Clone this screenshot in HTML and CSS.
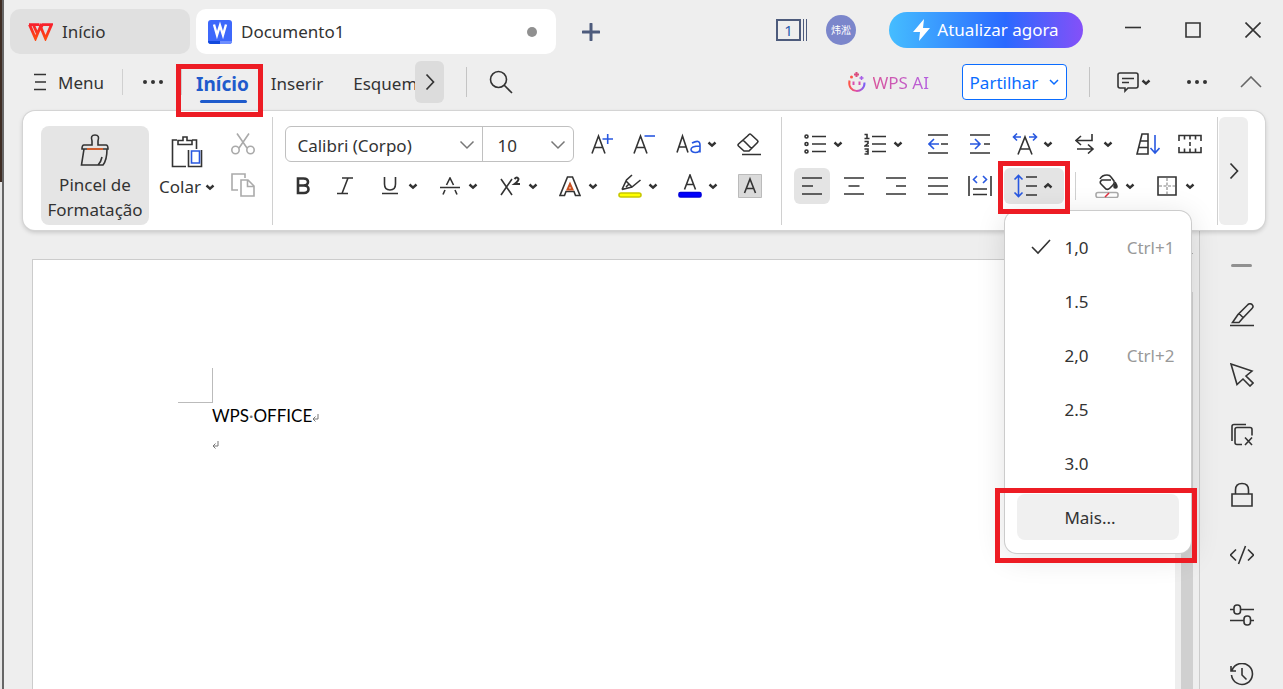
FILE: index.html
```
<!DOCTYPE html>
<html lang="pt">
<head>
    <meta charset="UTF-8">
    <meta name="viewport" content="width=device-width, initial-scale=1.0">
    <title>Documento1 - WPS Office</title>
    <link rel="stylesheet" href="styles.css">
</head>
<body>
    <!-- shared icons -->
    <svg class="sprite" aria-hidden="true">
        <symbol id="caret" viewBox="0 0 10 8"><path d="M1.500 2.500 5 5.700 8.500 2.500" fill="none" stroke="#333" stroke-width="2.400"/></symbol>
        <symbol id="chevron-down" viewBox="0 0 16 10"><path d="M1.500 1.500 8 8l6.500-6.500" fill="none" stroke="#777" stroke-width="1.500"/></symbol>
        <symbol id="chevron-right" viewBox="0 0 10 18"><path d="M1.500 1.500 8.500 9l-7 7.500" fill="none" stroke="#333" stroke-width="1.700"/></symbol>
    </svg>

    <div class="window">
        <header class="titlebar">
            <a href="#" class="doc-tab home">
                <svg class="icon" width="25" height="18" viewBox="0 0 25 18"><defs><linearGradient id="red" x2="0" y2="1"><stop stop-color="#f8202c"/><stop offset="1" stop-color="#ff4a12"/></linearGradient></defs><path d="M1 1.600h10.500M1.500 1.600 7.500 15.500 12.500 3.500 17.500 15.500 23.500 1.600H14.500L12.500 5.500M5.500 2 9 10" stroke="url(#red)" stroke-width="2.800"/></svg>
                <span>Início</span>
            </a>
            <a href="#" class="doc-tab active">
                <svg width="24" height="24" viewBox="0 0 24 24"><rect width="24" height="24" rx="3" fill="#3d68fb"/><path d="M0 21h12v3H3a3 3 0 0 1-3-3z" fill="#1249dd"/><path d="M12 21h12a3 3 0 0 1-3 3h-9z" fill="#6c8dff"/><path d="M6 4.500 9 15l3-9.500L15 15l3-10.500" fill="none" stroke="#fff" stroke-width="2.400"/></svg>
                <span>Documento1</span>
                <i class="unsaved"></i>
            </a>
            <button class="new-tab" aria-label="Novo"><svg class="icon" width="18" height="18" viewBox="0 0 18 18"><path d="M9 1v16M1 9h16" stroke="#4d5b7c" stroke-width="3" stroke-linecap="round"/></svg></button>

            <div class="title-right">
                <button class="windows" aria-label="Janelas"><span>1</span></button>
                <button class="avatar">炜淞</button>
                <button class="upgrade">
                    <svg width="18" height="22" viewBox="0 0 18 22"><path d="M11 0 0 13h7l-1 9L17 9h-7z" fill="#fff"/></svg>
                    Atualizar agora
                </button>
                <div class="window-controls">
                    <button aria-label="Minimizar"><svg class="icon" width="16" height="16" viewBox="0 0 16 16"><path d="M0 5.500h16"/></svg></button>
                    <button aria-label="Maximizar"><svg class="icon" width="16" height="16" viewBox="0 0 16 16"><path d="M1 1h14v14H1z"/></svg></button>
                    <button aria-label="Fechar"><svg class="icon" width="16" height="16" viewBox="0 0 16 16"><path d="M.500.500l15 15m0-15-15 15"/></svg></button>
                </div>
            </div>
        </header>

        <nav class="menubar">
            <button class="menu-btn">
                <svg class="icon" width="13" height="18" viewBox="0 0 13 18"><path d="M0 1.500h12M1 9h11M0 16.500h12"/></svg>
                Menu
            </button>
            <span class="sep"></span>
            <button class="dots" aria-label="Mais opções"><i></i><i></i><i></i></button>
            <span class="sep second"></span>
            <div class="tabs">
                <a href="#" class="tab current">Início<span class="mark"></span></a>
                <a href="#" class="tab">Inserir</a>
                <a href="#" class="tab cut">Esquema</a>
            </div>
            <button class="tabs-next" aria-label="Seguinte"><svg width="10" height="18"><use href="#chevron-right"/></svg></button>
            <span class="sep tall"></span>
            <button aria-label="Pesquisar"><svg class="icon" width="24" height="24" viewBox="0 0 24 24"><circle cx="9.500" cy="9.500" r="8"/><path d="m15 15 8 8"/></svg></button>

            <div class="menu-right">
                <button class="wps-ai">
                    <svg width="20" height="22" viewBox="0 0 20 22" fill="none" stroke-width="2"><defs><linearGradient id="ai"><stop stop-color="#ff5548"/><stop offset=".5" stop-color="#d94fb0"/><stop offset="1" stop-color="#7c62f6"/></linearGradient></defs><path d="M2.500 9.500C0 23 18 23 17.500 11.500" stroke="url(#ai)"/><path d="M6.500 10.500v3.500M12.500 10.500v3.500" stroke="#d94fb0"/><path d="M9.500 1v5M7 3.500h5" stroke="#d94f80"/><path d="M14.500 5v4M12.500 7h4" stroke="#a85fe8" stroke-width="1.500"/><circle cx="4.500" cy="6" r="1.500" fill="#ff5548"/></svg>
                    <span>WPS AI</span>
                </button>
                <button class="share">Partilhar <svg width="10" height="8" viewBox="0 0 10 8"><path d="M1 2l4 4 4-4" fill="none" stroke="#0a6cff" stroke-width="1.500"/></svg></button>
                <span class="sep tall"></span>
                <button class="comment" aria-label="Comentários">
                    <svg class="icon" width="22" height="21" viewBox="0 0 22 21"><path d="M3 1h16q2 0 2 2v11q0 2-2 2h-8l-3 3v-3H3q-2 0-2-2V3q0-2 2-2zM5 6.500h12M5 10.500h7"/></svg>
                    <svg width="10" height="8"><use href="#caret"/></svg>
                </button>
                <button class="dots" aria-label="Mais"><i></i><i></i><i></i></button>
                <button aria-label="Recolher"><svg class="icon" width="22" height="13" viewBox="0 0 22 13"><path d="M1 11 11 1l10 10" stroke="#666"/></svg></button>
            </div>
        </nav>

        <section class="ribbon">
            <button class="big painter">
                <svg class="icon" width="30" height="32" viewBox="0 0 30 32"><path d="M12 11V7q-2-6 3-6t3 6v4h8q2 0 2 4H2q0-4 2-4zM4 15 1.500 31H23q4-5 4-16M18 31q3-3 4-8"/><path d="M7 15h16" stroke="#d06030" stroke-width="2"/></svg>
                <span>Pincel de<br>Formatação</span>
            </button>
            <button class="big paste">
                <svg class="icon" width="32" height="32" viewBox="0 0 32 32"><path d="M6 4H1.500v26.500H15M21 4h4.500v9M7 8.500V4.500h5V1h4v3.500h5v4z"/><path d="M17.500 14v16.500h13V14"/><path d="M20.500 15h8v12h-8z" stroke="#2858e0"/></svg>
                <span>Colar <svg width="10" height="8"><use href="#caret"/></svg></span>
            </button>
            <div class="clip-tools">
                <button aria-label="Cortar"><svg class="icon muted" width="24" height="22" viewBox="0 0 24 22"><path d="M6 .500 16 15M18 .500 8 15"/><circle cx="4.500" cy="17" r="3.700"/><circle cx="19.500" cy="17" r="3.700"/></svg></button>
                <button aria-label="Copiar"><svg class="icon muted" width="24" height="24" viewBox="0 0 24 24"><path d="M7 17H1V1h13v4M10 7h7l6 6v10H10zM16.500 7v6.500H23"/></svg></button>
            </div>
            <span class="divider"></span>

            <div class="group">
                <div class="row">
                    <div class="combos">
                        <span class="combo font"><select aria-label="Tipo de letra"><option>Calibri (Corpo)</option></select><svg width="16" height="10"><use href="#chevron-down"/></svg></span>
                        <span class="combo size"><select aria-label="Tamanho"><option>10</option></select><svg width="16" height="10"><use href="#chevron-down"/></svg></span>
                    </div>
                    <button class="tool" aria-label="Aumentar"><svg class="icon" width="22" height="22" viewBox="0 0 22 22"><path d="M1 20.500 7.500 3 14 20.500M3.500 14.500h8"/><path d="M11.500 6H22M16.700 1v10" class="blue"/></svg></button>
                    <button class="tool" aria-label="Diminuir"><svg class="icon" width="22" height="22" viewBox="0 0 22 22"><path d="M1 20.500 7.500 3 14 20.500M3.500 14.500h8"/><path d="M11.500 3H22" class="blue"/></svg></button>
                    <button class="split" aria-label="Maiúsculas"><svg class="icon" width="26" height="22" viewBox="0 0 26 22"><path d="M1 19.500 6.500 3 12 19.500M3 14h7"/><path d="M16 10q8-4 8 2v7.500M24 13q-9 0-9 3.500c0 4 9 4 9-.500" class="blue"/></svg><svg class="caret" width="10" height="8"><use href="#caret"/></svg></button>
                    <button class="tool wide" aria-label="Limpar"><svg class="icon" width="24" height="24" viewBox="0 0 24 24"><path d="M10.500 4 12 2.500q1-1 2 0l6.500 6q1 1 0 2L12 19H7L1.500 14q-1-1 0-2zM6 8l8.500 8.500M5 22.500h19"/></svg></button>
                </div>
                <div class="row">
                    <button class="tool" aria-label="Negrito"><svg class="icon" width="14" height="18" viewBox="0 0 14 18"><path d="M2 1.500h5.500c6 0 6 7 0 7H2zm0 7h6c6 0 6 7.500 0 7.500H2z" stroke-width="2.600"/></svg></button>
                    <button class="tool" aria-label="Itálico"><svg class="icon" width="18" height="18" viewBox="0 0 18 18"><path d="M6 1h11M1 16.500h11M12 1 6 16.500"/></svg></button>
                    <button class="split" aria-label="Sublinhado"><svg class="icon" width="16" height="18" viewBox="0 0 16 18"><path d="M2.500 0v7q0 6 5.500 6t5.500-6V0M0 16.500h16"/></svg><svg class="caret" width="10" height="8"><use href="#caret"/></svg></button>
                    <button class="split" aria-label="Rasurado"><svg class="icon" width="20" height="18" viewBox="0 0 20 18"><path d="M6.500 8 10 1l3.500 7M0 10.500h20M5 13l-2 4.500M15 13l2 4.500"/></svg><svg class="caret" width="10" height="8"><use href="#caret"/></svg></button>
                    <button class="split" aria-label="Expoente"><svg class="icon" width="20" height="20" viewBox="0 0 20 20"><path d="m1 3 11 16M12 3 1 19"/><path d="M14.500 3q2.500-3 4 0 0 2-4 5H20" stroke-width="2"/></svg><svg class="caret" width="10" height="8"><use href="#caret"/></svg></button>
                    <button class="split" aria-label="Efeitos"><svg class="icon" width="22" height="21" viewBox="0 0 22 21"><path d="M8.500 1h5L21 19.500h-4.500L15 15.500H7l-1.500 4H1z"/><path d="m11 8-2.500 5.500h5z" stroke="#c85020" stroke-width="2"/></svg><svg class="caret" width="10" height="8"><use href="#caret"/></svg></button>
                    <button class="split" aria-label="Realce"><svg class="icon" width="24" height="24" viewBox="0 0 24 24"><path d="M4 15.500 8.500 6 14 1M8 7l6 6 8.500-7M14 13 4 15.500M11 10l-3 3"/><rect x="1" y="19" width="22" height="4" rx="2" fill="#ff0" stroke="#c8c800"/></svg><svg class="caret" width="10" height="8"><use href="#caret"/></svg></button>
                    <button class="split" aria-label="Cor"><svg class="icon" width="24" height="24" viewBox="0 0 24 24"><path d="M6.500 15.500 12 1l5.500 14.500M8.500 10.500h7"/><rect x="1" y="18.500" width="22" height="4.500" rx="1.500" fill="#00f" stroke="#00d"/></svg><svg class="caret" width="10" height="8"><use href="#caret"/></svg></button>
                    <button class="tool wide" aria-label="Sombreado"><svg class="icon" width="24" height="24" viewBox="0 0 24 24"><path d="M.500.500h23v23H.500z" fill="#dadada" stroke="#bbb" stroke-width="1"/><path d="M6.500 19 12 5l5.500 14M8.500 14.500h7"/></svg></button>
                </div>
            </div>
            <span class="divider"></span>

            <div class="group paragraph">
                <div class="row">
                    <button class="split" aria-label="Marcas"><svg class="icon" width="22" height="22" viewBox="0 0 22 22"><path d="M8 3.500h14M8 11h14M8 18.500h14"/><circle cx="2.500" cy="3.500" r="1.500"/><circle cx="2.500" cy="11" r="1.500"/><circle cx="2.500" cy="18.500" r="1.500"/></svg><svg class="caret" width="10" height="8"><use href="#caret"/></svg></button>
                    <button class="split" aria-label="Numeração"><svg class="icon" width="22" height="22" viewBox="0 0 22 22"><path d="M8 3.500h14M8 11h14M8 18.500h14M.500 1.500H3v4M.500 5.500h5M.500 8.500H4v2L1 13h4M.500 16H4v5H.500M1.500 18.500H4"/></svg><svg class="caret" width="10" height="8"><use href="#caret"/></svg></button>
                    <button class="tool" aria-label="Diminuir avanço"><svg class="icon" width="20" height="20" viewBox="0 0 20 20"><path d="M0 1h20M0 19h20M13 10h7"/><path d="M11 10H1m5-5-5 5 5 5" class="blue"/></svg></button>
                    <button class="tool" aria-label="Aumentar avanço"><svg class="icon" width="20" height="20" viewBox="0 0 20 20"><path d="M0 1h20M0 19h20M14 10h6"/><path d="M0 10h10M5 5l5 5-5 5" class="blue"/></svg></button>
                    <button class="split" aria-label="Escala"><svg class="icon" width="26" height="24" viewBox="0 0 26 24"><path d="M6 22.500 13 5l7 17.500M8.500 17h9"/><path d="M9 5H1.500M5 1.500 1.500 5 5 8.500M17 5h7.500M21 1.500 24.500 5 21 8.500" class="blue"/></svg><svg class="caret" width="10" height="8"><use href="#caret"/></svg></button>
                    <button class="split" aria-label="Marcas de parágrafo"><svg class="icon" width="20" height="20" viewBox="0 0 20 20"><path d="M17 0v6.500H1M6 2 1 6.500 6 11M2 15h16M13 10.500l5 4.500-5 4.500"/></svg><svg class="caret" width="10" height="8"><use href="#caret"/></svg></button>
                    <button class="tool" aria-label="Ordenar"><svg class="icon" width="24" height="22" viewBox="0 0 24 22"><path d="M6 1h6v20H1zM4.500 8H12M2.500 14.500H12"/><path d="M19 2v18m-4.500-5 4.500 5 4.500-5" class="blue"/></svg></button>
                    <button class="tool" aria-label="Tabulações"><svg class="icon" width="24" height="20" viewBox="0 0 24 20"><path d="M1 7V1.500h22V7M1 13v5.500h22V13M6.500 2v3.500M12 2v3.500M17.500 2v3.500M6.500 18v-3.500M12 18v-3.500M17.500 18v-3.500M12 8v4"/></svg></button>
                </div>
                <div class="row">
                    <button class="tool pressed" aria-label="Esquerda"><svg class="icon" width="20" height="18" viewBox="0 0 20 18"><path d="M0 1h20M0 9h11M0 17h20"/></svg></button>
                    <button class="tool" aria-label="Centro"><svg class="icon" width="20" height="18" viewBox="0 0 20 18"><path d="M0 1h20M4.500 9h11M0 17h20"/></svg></button>
                    <button class="tool" aria-label="Direita"><svg class="icon" width="20" height="18" viewBox="0 0 20 18"><path d="M0 1h20M10 9h10M0 17h20"/></svg></button>
                    <button class="tool" aria-label="Justificar"><svg class="icon" width="20" height="18" viewBox="0 0 20 18"><path d="M0 1h20M0 9h20M0 17h20"/></svg></button>
                    <button class="tool" aria-label="Distribuir"><svg class="icon" width="24" height="22" viewBox="0 0 24 22"><path d="M1 1v20M23 1v20M5 14h14M5 19.500h14"/><path d="M9 1 5.500 4.500 9 8M15 1l3.500 3.500L15 8" class="blue"/></svg></button>
                    <div class="spacing">
                        <button class="split pressed" aria-label="Espaçamento entre linhas"><svg class="icon" width="24" height="24" viewBox="0 0 24 24"><path d="M13 3h11M13 12h11M13 21h11"/><path d="M5.500 1.500v21M1.500 5.500l4-4 4 4M1.500 18.500l4 4 4-4" class="blue"/></svg><svg class="caret up" width="10" height="8"><use href="#caret"/></svg></button>
                        <span class="mark"></span>
                        <div class="dropdown">
                            <button><svg class="icon check" width="20" height="16" viewBox="0 0 20 16"><path d="m1 8 6 6L19 1"/></svg><span>1,0</span><kbd>Ctrl+1</kbd></button>
                            <button><span>1.5</span></button>
                            <button><span>2,0</span><kbd>Ctrl+2</kbd></button>
                            <button><span>2.5</span></button>
                            <button><span>3.0</span></button>
                            <button class="hovered"><span>Mais...</span><i class="mark"></i></button>
                        </div>
                    </div>
                    <span class="sep"></span>
                    <button class="split" aria-label="Preenchimento"><svg class="icon" width="24" height="24" viewBox="0 0 24 24"><path d="M5 5q2-4 7-4 3 0 4 2l3 4q1 2-1 4l-3 3q-2 2-4 1L6 10q-2-2 1-4h9"/><path d="M20.500 9q3 5 0 5t0-5z" fill="#333"/><rect x="1" y="18.500" width="22" height="5" rx="2" stroke="#aaa"/><path d="m10 23 4-4" stroke="#e03040"/></svg><svg class="caret" width="10" height="8"><use href="#caret"/></svg></button>
                    <button class="split" aria-label="Limites"><svg class="icon" width="20" height="20" viewBox="0 0 20 20"><path d="M10 2v16M2 10h16" stroke="#aaa" stroke-dasharray="3 1.500"/><path d="M1 1h18v18H1z"/></svg><svg class="caret" width="10" height="8"><use href="#caret"/></svg></button>
                </div>
            </div>
            <span class="divider last"></span>
            <button class="expand" aria-label="Mais ferramentas"><svg width="10" height="18"><use href="#chevron-right"/></svg></button>
        </section>

        <main class="workspace">
            <article class="page">
                <div class="corner"></div>
                <p>WPS<span class="space">·</span>OFFICE<svg width="7" height="8" viewBox="0 0 7 8"><path d="M6 0v5H1m2.500-2.500L1 5l2.500 2.500" fill="none" stroke="#777"/></svg></p>
                <p><svg width="7" height="8" viewBox="0 0 7 8"><path d="M6 0v5H1m2.500-2.500L1 5l2.500 2.500" fill="none" stroke="#777"/></svg></p>
            </article>
            <div class="scrollbar"><svg width="12" height="6" viewBox="0 0 12 6"><path d="M6 0 12 6H0z" fill="#666"/></svg><div class="thumb"></div></div>
            <aside class="sidebar">
                <i class="grip"></i>
                <button aria-label="Realçar"><svg class="icon" width="24" height="24" viewBox="0 0 24 24"><path d="M0 22.500h24M2.500 19.500 8 11.500 18 1.500q2-1.500 4 0 2 2 0 4L12 16l-3 3.500zM9 10.500l4.500 4.500"/></svg></button>
                <button aria-label="Selecionar"><svg class="icon" width="24" height="24" viewBox="0 0 24 24"><path d="M1 1l21 7-6 5 7 7-3 3-7-7-6 5.500z"/></svg></button>
                <button aria-label="Objetos"><svg class="icon" width="24" height="24" viewBox="0 0 24 24"><path d="M12 21.500H7q-2 0-2-2v-13q0-2 2-2h13q2 0 2 2v6M2 18V3.500q0-2 2-2h12M15 14.500l7 7.500m0-7.500L15 22"/></svg></button>
                <button aria-label="Proteger"><svg class="icon" width="24" height="26" viewBox="0 0 24 26"><path d="M2 12h20v12H2zM5.500 12V8q0-6.500 6.500-6.500T18.500 8v4"/></svg></button>
                <button aria-label="Código"><svg class="icon" width="24" height="20" viewBox="0 0 24 20"><path d="M6 4.500.500 10 6 15.500M18 4.500l5.500 5.500-5.500 5.500M15.500 1l-7 18"/></svg></button>
                <button aria-label="Definições"><svg class="icon" width="24" height="22" viewBox="0 0 24 22"><path d="M0 5.500h4M10.500 5.500H24M0 16.500h14M20.500 16.500H24"/><rect x="4" y="1" width="6.500" height="9" rx="3"/><rect x="14" y="12" width="6.500" height="9" rx="3"/></svg></button>
                <button aria-label="Histórico"><svg class="icon" width="24" height="24" viewBox="0 0 24 24"><path d="M2 7.500a10.500 10.500 0 1 1-.500 4.500M1 3v5h5M12 5v7l4.500 4.500"/></svg></button>
            </aside>
        </main>
    </div>
</body>
</html>
```
FILE: styles.css
```
* {
    margin: 0;
    padding: 0;
    box-sizing: border-box;
}

body {
    font-family: 'Noto Sans', 'Noto Sans CJK SC', sans-serif;
    font-size: 17px;
    color: #333;
    background: linear-gradient(#3f2d24 182px, #e6e6e6 182px);
    height: 100vh;
    padding-left: 2px;
    overflow: hidden;
}

button {
    display: flex;
    align-items: center;
    justify-content: center;
    border: none;
    background: none;
    font: inherit;
    color: inherit;
    cursor: pointer;
}

a {
    color: inherit;
    text-decoration: none;
}

svg {
    flex: none;
}

.sprite {
    display: none;
}

.icon {
    fill: none;
    stroke: #333;
    stroke-width: 1.6;
}

.icon.muted {
    stroke: #aaa;
}

.icon .blue {
    stroke: #2858e0;
}

.window {
    display: flex;
    flex-direction: column;
    height: 100%;
    border-left: 2px solid #666;
    background-color: #eee;
}

/* red frames */
.mark {
    position: absolute;
    border: 5px solid #ed1c24;
    pointer-events: none;
    z-index: 5;
}

/* title bar */
.titlebar {
    display: flex;
    align-items: center;
    gap: 6px;
    padding: 9px 0 7px 6px;
}

.doc-tab {
    display: flex;
    align-items: center;
    gap: 9px;
    width: 180px;
    height: 45px;
    padding: 0 19px 0 18px;
    border-radius: 10px;
    background-color: #e0e0e0;
}

.doc-tab.active {
    width: 360px;
    padding-left: 12px;
    background-color: #fff;
}

.unsaved {
    width: 10px;
    height: 10px;
    margin-left: auto;
    border-radius: 50%;
    background-color: #909090;
}

.new-tab {
    padding: 10px 20px;
}

.title-right {
    display: flex;
    align-items: center;
    margin: 0 0 4px auto;
}

.windows {
    height: 22px;
    margin-right: 19px;
    padding-right: 5px;
    border-right: 1px solid #4d5b7c;
    font-size: 15px;
    color: #2a5db0;
}

.windows span {
    width: 25px;
    line-height: 18px;
    border: 2px solid #4d5b7c;
    box-shadow: 2px 0 #eee, 3px 0 #4d5b7c;
}

.avatar {
    width: 30px;
    height: 30px;
    margin-right: 33px;
    border-radius: 50%;
    background-color: #7b86cb;
    font-size: 10px;
    color: #fff;
}

.upgrade {
    gap: 6px;
    width: 194px;
    height: 36px;
    margin-right: 20px;
    border-radius: 18px;
    background: linear-gradient(90deg, #45bdff, #2a69ff 60%, #8550f8);
    color: #fff;
}

.window-controls {
    display: flex;
}

.window-controls button {
    width: 60px;
    height: 36px;
}

/* menu bar */
.menubar {
    display: flex;
    align-items: center;
    height: 42px;
    margin-bottom: 8px;
    padding: 0 21px 0 30px;
}

.menu-btn {
    gap: 11px;
}

.sep {
    width: 1px;
    height: 26px;
    background-color: #d0d0d0;
}

.sep.tall {
    height: 30px;
    background-color: #c4c4c4;
}

.menubar > .sep {
    margin: 0 20px 0 18px;
}

.menubar > .sep.second {
    margin-right: 14px;
}

.menubar > .sep.tall {
    margin: 0 22px;
}

.dots {
    gap: 4px;
}

.dots i {
    width: 4px;
    height: 4px;
    border-radius: 50%;
    background-color: #333;
}

.tabs {
    display: flex;
    gap: 22px;
}

.tab {
    position: relative;
    height: 42px;
    line-height: 46px;
}

.tab.current {
    font-size: 19px;
    font-weight: bold;
    color: #1f5bcc;
}

.tab.current::after {
    content: "";
    position: absolute;
    inset: auto 2px 0 4px;
    height: 3px;
    border-radius: 2px;
    background-color: #1f5bcc;
}

.tab .mark {
    inset: 3px -14px -14px -20px;
}

.tab.cut {
    width: 62px;
    margin-left: 8px;
    overflow: hidden;
}

.tabs-next {
    width: 29px;
    height: 42px;
    border-radius: 6px;
    background-color: #dcdcdc;
}

.menu-right {
    display: flex;
    align-items: center;
    margin-left: auto;
}

.wps-ai {
    gap: 6px;
    margin-right: 33px;
}

.wps-ai span {
    background: linear-gradient(90deg, #d9559c, #b45fe0);
    background-clip: text;
    color: transparent;
}

.share {
    gap: 11px;
    width: 105px;
    height: 36px;
    margin-right: 22px;
    border: 1px solid #0a6cff;
    border-radius: 4px;
    background-color: #fff;
    color: #0a6cff;
}

.comment {
    gap: 2px;
    margin: 0 36px 0 27px;
}

.menu-right .dots {
    margin-right: 33px;
}

/* ribbon */
.ribbon {
    position: relative;
    z-index: 2;
    display: flex;
    margin: 0 18px 0 19px;
    padding: 6px 17px 5px;
    border-radius: 12px;
    background-color: #fff;
    box-shadow: 0 0 0 1px #d4d4d4, 0 2px 5px rgba(0, 0, 0, 0.2);
}

.big {
    flex-direction: column;
    line-height: 25px;
}

.painter {
    gap: 6px;
    width: 108px;
    height: 99px;
    margin: 9px 10px 0 1px;
    padding-top: 4px;
    border-radius: 8px;
    background-color: #e5e5e5;
}

.paste {
    gap: 6px;
    height: 75px;
    margin: 15px 16px 0 0;
    justify-content: flex-start;
}

.paste svg {
    margin-top: 4px;
}

.paste span svg {
    margin: 0;
    vertical-align: 2px;
}

.clip-tools {
    display: flex;
    flex-direction: column;
    gap: 18px;
    padding-top: 16px;
}

.divider {
    width: 1px;
    margin: 0 12px 0 17px;
    background-color: #d0d0d0;
}

.divider + .group + .divider {
    margin-left: 10px;
}

.divider + .group + .divider.last {
    margin: 0 1px 0 auto;
}

.group {
    display: flex;
    flex-direction: column;
    gap: 6px;
    padding: 9px 0;
}

.row {
    display: flex;
    align-items: center;
    height: 36px;
}

.combos {
    display: flex;
    height: 36px;
    margin-right: 10px;
    border: 1px solid #c0c0c0;
    border-radius: 6px;
}

.combo {
    position: relative;
    width: 196px;
}

.combo.size {
    width: 91px;
    border-left: 1px solid #c0c0c0;
}

.combo select {
    appearance: none;
    width: 100%;
    height: 100%;
    padding: 2px 24px 0 11px;
    border: none;
    background: none;
    font: inherit;
    color: inherit;
}

.combo.size select {
    padding-left: 14px;
}

.combo svg {
    position: absolute;
    right: 7px;
    top: 13px;
    pointer-events: none;
}

.tool {
    width: 36px;
    height: 36px;
    margin-right: 6px;
    border-radius: 6px;
}

.tool.wide {
    width: 42px;
    margin-right: 0;
}

.paragraph .split + .tool {
    margin-left: 6px;
}

.split {
    width: 60px;
    height: 36px;
    border-radius: 6px;
    display: grid;
    grid-template-columns: 26px 10px;
    gap: 5px;
    justify-items: center;
    justify-content: start;
    padding-left: 8px;
}

.pressed {
    background-color: #e4e4e4;
}

.caret.up {
    transform: rotate(180deg);
}

.row .sep {
    height: 28px;
    margin: 0 10px 0 11px;
}

.expand {
    width: 29px;
    border-radius: 6px;
    background-color: #eee;
}

/* line spacing menu */
.spacing {
    position: relative;
}

.spacing > .mark {
    inset: -7px -6px -10px -6px;
}

.dropdown {
    position: absolute;
    top: 43px;
    left: 1px;
    display: flex;
    flex-direction: column;
    gap: 8px;
    width: 186px;
    padding: 13px 12px;
    border-radius: 12px;
    background-color: #fff;
    box-shadow: 0 0 0 1px #ccc, 0 4px 30px rgba(0, 0, 0, 0.12);
}

.dropdown button {
    position: relative;
    display: grid;
    grid-template-columns: 47px 1fr auto;
    height: 46px;
    padding-right: 5px;
    border-radius: 8px;
    text-align: left;
}

.dropdown span {
    grid-column: 2;
}

.dropdown kbd {
    font: inherit;
    color: #999;
}

.check {
    margin-left: 14px;
}

.dropdown .hovered {
    background-color: #f0f0f0;
}

.dropdown .mark {
    inset: -6px -18px -23px -22px;
}

/* document */
.workspace {
    flex: 1;
    display: flex;
    min-height: 0;
}

.page {
    flex: 1;
    margin: 29px 0 0 28px;
    padding: 108px 0 0 145px;
    border-top: 1px solid #ccc;
    border-left: 1px solid #ccc;
    background-color: #fff;
    font-family: Lato, sans-serif;
    color: #000;
}

.corner {
    width: 35px;
    height: 35px;
    margin-bottom: -1px;
    border-right: 1px solid #bbb;
    border-bottom: 1px solid #bbb;
}

.page p {
    padding-left: 34px;
    line-height: 27px;
}

.space {
    color: #777;
}

.scrollbar {
    width: 24px;
    padding: 18px 6px 0;
    overflow: hidden;
}

.scrollbar svg {
    display: block;
}

.thumb {
    height: 100%;
    margin-top: 38px;
    background-color: #d0d0d0;
}

.sidebar {
    display: flex;
    flex-direction: column;
    align-items: center;
    width: 84px;
    border-left: 1px solid #ccc;
    overflow: hidden;
}

.sidebar button {
    flex: none;
    width: 60px;
    height: 60px;
}

.grip {
    flex: none;
    width: 21px;
    height: 3px;
    margin: 34px 0 18px;
    border-radius: 2px;
    background-color: #909090;
}
```
